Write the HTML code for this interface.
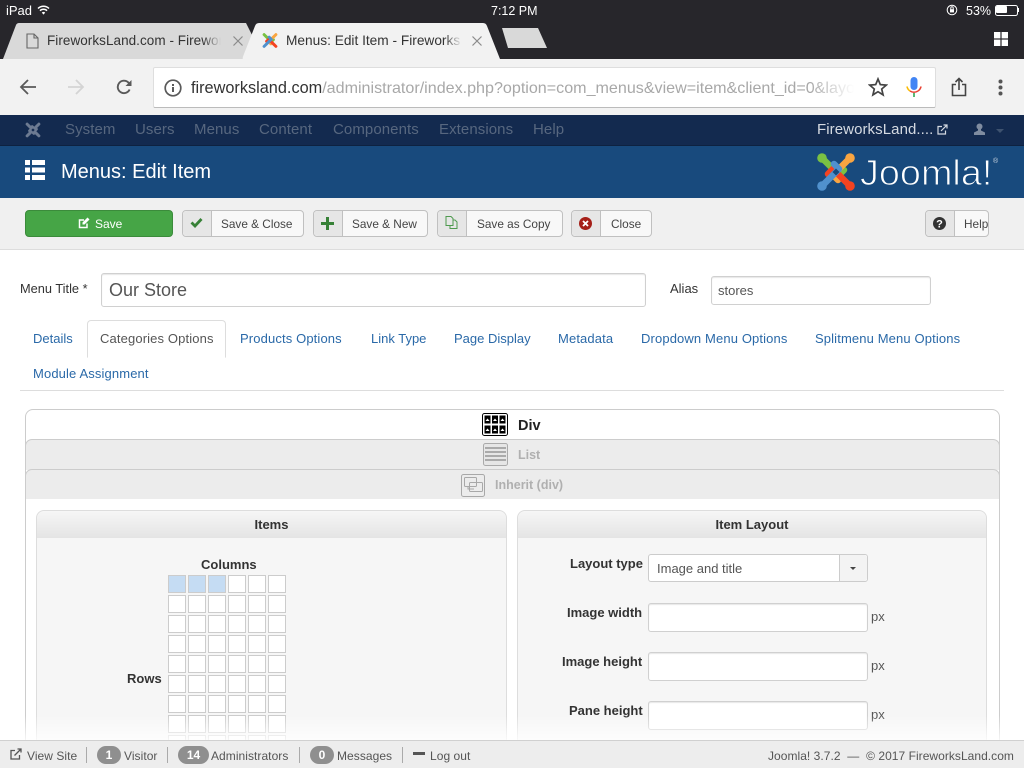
<!DOCTYPE html>
<html><head><meta charset="utf-8"><title>Menus: Edit Item</title>
<style>
html,body{margin:0;padding:0;width:1024px;height:768px;overflow:hidden;background:#fff}
body{position:relative;font-family:"Liberation Sans",sans-serif;color:#333}
.a,.t{position:absolute}
.t{white-space:nowrap;line-height:18px}
.btn{position:absolute;top:210px;height:25px;border:1px solid #c0c0c0;border-radius:4px;background:#f8f8f8;box-sizing:content-box}
.btn i{position:absolute;left:0;top:0;bottom:0;width:28px;background:#e6e6e6;border-right:1px solid #c0c0c0;border-radius:4px 0 0 4px}
.btn span{position:absolute;top:4px;font-size:11.8px;line-height:18px;color:#444;white-space:nowrap}
.tab{position:absolute;font-size:13px;line-height:18px;color:#2a69a8;white-space:nowrap;letter-spacing:.13px}
.nav{position:absolute;top:121px;font-size:15px;line-height:18px;color:#57677f;white-space:nowrap;letter-spacing:.08px}
.lbl{position:absolute;font-weight:bold;font-size:13px;line-height:16px;color:#333;text-align:right;white-space:nowrap}
.inp{position:absolute;left:648px;width:218px;height:27px;background:#fff;border:1px solid #d0d0d0;border-radius:3px;box-sizing:content-box;box-shadow:inset 0 1px 1px rgba(0,0,0,.1)}
.px{position:absolute;left:871px;font-size:13px;line-height:16px;color:#555}
.c{position:absolute;width:16px;height:16px;border:1px solid #ccc;background:#fff}
.ph{position:absolute;top:511px;height:27px;background:linear-gradient(#f6f6f6,#e4e4e4);border-radius:8px 8px 0 0;text-align:center;font-weight:bold;font-size:13px;line-height:28px;color:#333}
.panel{position:absolute;top:510px;height:240px;background:#f6f6f6;border:1px solid #ddd;border-radius:8px 8px 0 0;box-sizing:border-box}
.f{position:absolute;top:749px;font-size:12px;line-height:14px;color:#555;white-space:nowrap;letter-spacing:.05px}
.bd{position:absolute;top:746px;height:18px;border-radius:9px;background:#8f8f8f;color:#fff;font-size:12px;font-weight:bold;text-align:center;line-height:19px}
.sep{position:absolute;top:747px;width:1px;height:16px;background:#aaa}
</style></head><body>

<!-- iOS status bar & tab strip -->
<div class="a" style="left:0;top:0;width:1024px;height:59px;background:#27262b"></div>
<div class="t" style="left:6px;top:2px;font-size:13px;color:#fff">iPad</div>
<svg class="a" style="left:37px;top:5px" width="13" height="10" viewBox="0 0 13 10"><path d="M1 3.500a8 8 0 0 1 11 0M3 5.700a5 5 0 0 1 7 0" fill="none" stroke="#fff" stroke-width="1.500"/><path d="M4.800 7.600a2.600 2.600 0 0 1 3.400 0L6.500 9.600z" fill="#fff"/></svg>
<div class="t" style="left:491px;top:2px;font-size:12.5px;color:#fff">7:12 PM</div>
<svg class="a" style="left:946px;top:4px" width="12" height="12" viewBox="0 0 12 12"><circle cx="6" cy="6" r="4.800" fill="none" stroke="#fff" stroke-width="1"/><rect x="4" y="5.200" width="4" height="3.200" fill="#fff"/><path d="M4.800 5.200V4a1.200 1.200 0 0 1 2.400 0v1.200" fill="none" stroke="#fff"/></svg>
<div class="t" style="left:966px;top:2px;font-size:12.5px;color:#fff">53%</div>
<div class="a" style="left:995px;top:5px;width:21px;height:9px;border:1px solid #fff;border-radius:2.500px"></div>
<div class="a" style="left:996px;top:6px;width:11px;height:7px;background:#fff;border-radius:1px"></div>
<div class="a" style="left:1018px;top:8px;width:1px;height:4px;background:#fff"></div>

<svg class="a" style="left:0;top:23px" width="560" height="36" viewBox="0 0 560 36">
<path d="M3 36 L16 2 Q17 0 19 0 H246 L253 14 L242 36Z" fill="#d9d9d9"/>
<path d="M242 36 L255 3 Q256 0 259 0 H483 Q486 0 487 3 L500 36Z" fill="#f2f2f2"/>
<path d="M502 5 H538 L547 25 H508Z" fill="#d9d9d9"/>
</svg>
<svg class="a" style="left:26px;top:33px" width="13" height="16" viewBox="0 0 13 16"><path d="M1 1H8L12 5V15H1ZM8 1V5H12" fill="none" stroke="#666" stroke-width="1.100"/></svg>
<div class="a" style="left:47px;top:32px;width:174px;height:18px;overflow:hidden"><div class="t" style="left:0;top:0;font-size:13.5px;color:#333;letter-spacing:.05px">FireworksLand.com - Fireworks</div><div class="a" style="right:0;top:0;width:18px;height:18px;background:linear-gradient(90deg,rgba(217,217,217,0),#d9d9d9)"></div></div>
<svg class="a" style="left:233px;top:36px" width="10" height="10" viewBox="0 0 10 10"><path d="M0.500 0.500L9.500 9.500M9.500 0.500L0.500 9.500" stroke="#8a8a8a" stroke-width="1.200"/></svg>
<svg class="a" style="left:262px;top:32px" width="16" height="17" viewBox="0 0 38 38" fill="none" stroke-width="7" stroke-linecap="round" stroke-linejoin="round">
<path d="M5 5 L10 10 L22 22 L27 17" stroke="#7ac143"/><path d="M33 5 L28 10 L16 22 L21 27" stroke="#f9a541"/><path d="M33 33 L28 28 L16 16 L11 21" stroke="#f44321"/><path d="M5 33 L10 28 L22 16 L17 11" stroke="#5091cd"/></svg>
<div class="a" style="left:286px;top:32px;width:176px;height:18px;overflow:hidden"><div class="t" style="left:0;top:0;font-size:13.7px;color:#333">Menus: Edit Item - Fireworks Land</div><div class="a" style="right:0;top:0;width:18px;height:18px;background:linear-gradient(90deg,rgba(242,242,242,0),#f2f2f2)"></div></div>
<svg class="a" style="left:472px;top:36px" width="10" height="10" viewBox="0 0 10 10"><path d="M0.500 0.500L9.500 9.500M9.500 0.500L0.500 9.500" stroke="#8a8a8a" stroke-width="1.200"/></svg>
<svg class="a" style="left:994px;top:32px" width="14" height="14" viewBox="0 0 14 14" fill="#fff"><rect width="6.400" height="6.400"/><rect x="7.600" width="6.400" height="6.400"/><rect y="7.600" width="6.400" height="6.400"/><rect x="7.600" y="7.600" width="6.400" height="6.400"/></svg>

<!-- Chrome toolbar -->
<div class="a" style="left:0;top:59px;width:1024px;height:56px;background:#f2f2f2"></div>
<svg class="a" style="left:19px;top:78px" width="18" height="18" viewBox="0 0 18 18"><path d="M17 9H2M9 2L2 9L9 16" fill="none" stroke="#5a5a5a" stroke-width="1.800"/></svg>
<svg class="a" style="left:67px;top:78px" width="18" height="18" viewBox="0 0 18 18"><path d="M1 9H16M9 2L16 9L9 16" fill="none" stroke="#d4d4d4" stroke-width="1.800"/></svg>
<svg class="a" style="left:115px;top:78px" width="18" height="18" viewBox="0 0 18 18"><path d="M14.600 11.500A6.200 6.200 0 1 1 13.400 4.600L15.200 6.400" fill="none" stroke="#5a5a5a" stroke-width="1.900"/><path d="M16.500 2V8H10.500Z" fill="#5a5a5a"/></svg>
<div class="a" style="left:153px;top:67px;width:781px;height:39px;background:#fff;border:1px solid #dedede;border-bottom:1px solid #bbb;border-radius:2px"></div>
<svg class="a" style="left:164px;top:79px" width="18" height="18" viewBox="0 0 18 18"><circle cx="9" cy="9" r="7.800" fill="none" stroke="#5a5a5a" stroke-width="1.700"/><rect x="8" y="8" width="2" height="5" fill="#5a5a5a"/><rect x="8" y="5" width="2" height="2" fill="#5a5a5a"/></svg>
<div class="a" style="left:191px;top:77px;width:668px;height:22px;overflow:hidden"><div class="t" style="left:0;top:1px;font-size:16.3px;color:#333;line-height:20px">fireworksland.com<span style="color:#a8a8a8;font-size:16.1px">/administrator/index.php?option=com_menus&amp;view=item&amp;client_id=0&amp;layout</span></div><div class="a" style="right:0;top:0;width:50px;height:22px;background:linear-gradient(90deg,rgba(255,255,255,0),#fff 90%)"></div></div>
<svg class="a" style="left:868px;top:77px" width="20" height="20" viewBox="0 0 20 20"><path d="M10 2L12.300 7.600L18.300 8.100L13.700 12L15.100 17.900L10 14.700L4.900 17.900L6.300 12L1.700 8.100L7.700 7.600Z" fill="none" stroke="#444" stroke-width="1.700"/></svg>
<svg class="a" style="left:906px;top:76px" width="16" height="22" viewBox="0 0 16 22"><rect x="4.500" y="1" width="7" height="13" rx="3.500" fill="#4285f4"/><path d="M1 10.500A7 7 0 0 0 4 15" fill="none" stroke="#fbbc05" stroke-width="1.600"/><path d="M15 10.500A7 7 0 0 1 12 15" fill="none" stroke="#ea4335" stroke-width="1.600"/><path d="M4 15Q8 17.500 12 15" fill="none" stroke="#ea4335" stroke-width="1.600"/><rect x="7.200" y="17" width="1.600" height="4" fill="#34a853"/></svg>
<svg class="a" style="left:951px;top:77px" width="16" height="20" viewBox="0 0 16 20"><path d="M5 7.500H1.500V18.500H14.500V7.500H11M8 13V2M4.500 5L8 1.500L11.500 5" fill="none" stroke="#444" stroke-width="1.600"/></svg>
<svg class="a" style="left:998px;top:79px" width="5" height="17" viewBox="0 0 5 17" fill="#555"><circle cx="2.500" cy="2.500" r="2"/><circle cx="2.500" cy="8.500" r="2"/><circle cx="2.500" cy="14.500" r="2"/></svg>

<!-- Joomla nav -->
<div class="a" style="left:0;top:115px;width:1024px;height:30px;background:#132a4f;border-bottom:1px solid #0e2240"></div>
<svg class="a" style="left:25px;top:122px" width="16" height="16" viewBox="0 0 38 38" fill="none" stroke="#6d7b92" stroke-width="7" stroke-linecap="round" stroke-linejoin="round"><path d="M5 5 L10 10 L22 22 L27 17"/><path d="M33 5 L28 10 L16 22 L21 27"/><path d="M33 33 L28 28 L16 16 L11 21"/><path d="M5 33 L10 28 L22 16 L17 11"/><path d="M19 15L23 19L19 23L15 19Z" fill="#132a4f" stroke="none"/></svg>
<div class="nav" style="left:65px">System</div><div class="nav" style="left:135px">Users</div><div class="nav" style="left:194px">Menus</div><div class="nav" style="left:259px">Content</div><div class="nav" style="left:333px">Components</div><div class="nav" style="left:439px">Extensions</div><div class="nav" style="left:533px">Help</div>
<div class="nav" style="left:817px;color:#d5dae2">FireworksLand....</div>
<svg class="a" style="left:937px;top:124px" width="11" height="11" viewBox="0 0 11 11"><path d="M5 2.500H1V10H8.500V6.500M4 7L10 1M6.500 1H10V4.500" fill="none" stroke="#d5dae2" stroke-width="1.200"/></svg>
<svg class="a" style="left:973px;top:123px" width="13" height="13" viewBox="0 0 13 13" fill="#7f8ca0"><circle cx="6.500" cy="3.500" r="3"/><path d="M5 6H8V7.500L12 9.500V12H1V9.500L5 7.500Z"/></svg>
<div class="a" style="left:996px;top:129px;border:4px solid transparent;border-top:4px solid #3e526f;border-bottom:0"></div>

<!-- Header -->
<div class="a" style="left:0;top:146px;width:1024px;height:52px;background:#184a7d"></div>
<svg class="a" style="left:25px;top:160px" width="20" height="20" viewBox="0 0 20 20" fill="#fff"><rect width="5" height="5"/><rect x="7" width="13" height="5"/><rect y="7.500" width="5" height="5"/><rect x="7" y="7.500" width="13" height="5"/><rect y="15" width="5" height="5"/><rect x="7" y="15" width="13" height="5"/></svg>
<div class="t" style="left:61px;top:160px;font-size:20px;line-height:24px;color:#fff">Menus: Edit Item</div>
<svg class="a" style="left:817px;top:153px" width="38" height="38" viewBox="0 0 38 38" fill="none" stroke-width="6.500" stroke-linecap="round" stroke-linejoin="round">
<path d="M5 5 L10 10 L22 22 L27 17" stroke="#7ac143"/>
<path d="M33 5 L28 10 L16 22 L21 27" stroke="#f9a541"/>
<path d="M33 33 L28 28 L16 16 L11 21" stroke="#f44321"/>
<path d="M5 33 L10 28 L22 16 L17 11" stroke="#5091cd"/>
<path d="M19 15.500L22.500 19L19 22.500L15.500 19Z" fill="#184a7d"/>
<circle cx="5" cy="5" r="4.800" fill="#7ac143"/><circle cx="33" cy="5" r="4.800" fill="#f9a541"/><circle cx="5" cy="33" r="4.800" fill="#5091cd"/><circle cx="33" cy="33" r="4.800" fill="#f44321"/></svg>
<div class="t" style="left:860px;top:153px;font-size:36px;line-height:40px;color:#fff;-webkit-text-stroke:1px #184a7d;transform-origin:0 0;transform:scaleX(1.05)">Joomla!</div>
<div class="t" style="left:993px;top:158px;font-size:7px;line-height:8px;color:#cdd6e2">®</div>

<!-- Toolbar -->
<div class="a" style="left:0;top:198px;width:1024px;height:52px;background:#f0f0f0;border-bottom:1px solid #ddd;box-sizing:border-box"></div>
<div class="a" style="left:25px;top:210px;width:146px;height:25px;background:#46a546;border:1px solid #3b8b3b;border-radius:4px"></div>
<svg class="a" style="left:78px;top:217px" width="12" height="12" viewBox="0 0 12 12"><path d="M9 6.500V10.500H1.500V3H6" fill="none" stroke="#fff" stroke-width="1.500"/><path d="M4.500 5.500L9.500 .5L11.500 2.500L6.500 7.500H4.500Z" fill="#fff"/></svg>
<div class="t" style="left:95px;top:215px;font-size:12px;color:#fff">Save</div>

<div class="btn" style="left:182px;width:120px"><i></i><span style="left:38px">Save &amp; Close</span></div>
<svg class="a" style="left:190px;top:217px" width="13" height="11" viewBox="0 0 13 11"><path d="M1.500 5.500L5 9L11.500 2" fill="none" stroke="#378137" stroke-width="2.800"/></svg>
<div class="btn" style="left:313px;width:113px"><i></i><span style="left:38px">Save &amp; New</span></div>
<svg class="a" style="left:321px;top:217px" width="13" height="13" viewBox="0 0 13 13"><path d="M6.500 0V13M0 6.500H13" stroke="#378137" stroke-width="3"/></svg>
<div class="btn" style="left:437px;width:124px"><i></i><span style="left:39px">Save as Copy</span></div>
<svg class="a" style="left:445px;top:216px" width="13" height="13" viewBox="0 0 13 13"><path d="M1 .5H6L8 2.500V9.500H1ZM8 4H10L12 6V12.500H5V9.500" fill="none" stroke="#4f9a4f" stroke-width="1"/></svg>
<div class="btn" style="left:571px;width:79px"><i></i><span style="left:39px">Close</span></div>
<svg class="a" style="left:579px;top:217px" width="13" height="13" viewBox="0 0 13 13"><circle cx="6.500" cy="6.500" r="6.500" fill="#a51f18"/><path d="M4 4L9 9M9 4L4 9" stroke="#fff" stroke-width="1.800"/></svg>
<div class="btn" style="left:925px;width:62px"><i></i><span style="left:38px">Help</span></div>
<svg class="a" style="left:933px;top:217px" width="13" height="13" viewBox="0 0 13 13"><circle cx="6.500" cy="6.500" r="6.500" fill="#333"/><text x="6.500" y="10.500" font-family="Liberation Sans" font-size="11" font-weight="bold" text-anchor="middle" fill="#fff">?</text></svg>

<!-- Title row -->
<div class="t" style="left:20px;top:280px;font-size:12.8px">Menu Title *</div>
<div class="a" style="left:101px;top:273px;width:543px;height:32px;background:#fff;border:1px solid #d0d0d0;border-radius:3px;box-shadow:inset 0 1px 1px rgba(0,0,0,.1)"></div>
<div class="t" style="left:109px;top:279px;font-size:18px;line-height:22px;color:#555">Our Store</div>
<div class="t" style="left:670px;top:280px;font-size:13px">Alias</div>
<div class="a" style="left:711px;top:276px;width:218px;height:27px;background:#fff;border:1px solid #d0d0d0;border-radius:3px;box-shadow:inset 0 1px 1px rgba(0,0,0,.1)"></div>
<div class="t" style="left:718px;top:282px;font-size:13px;color:#555">stores</div>

<!-- Tabs -->
<div class="tab" style="left:33px;top:330px;letter-spacing:0">Details</div>
<div class="a" style="left:87px;top:320px;width:137px;height:36px;background:#fff;border:1px solid #ddd;border-bottom:1px solid #fff;border-radius:4px 4px 0 0;z-index:2"></div>
<div class="tab" style="left:100px;top:330px;color:#555;z-index:3">Categories Options</div>
<div class="tab" style="left:240px;top:330px">Products Options</div>
<div class="tab" style="left:371px;top:330px;letter-spacing:0">Link Type</div>
<div class="tab" style="left:454px;top:330px;letter-spacing:0">Page Display</div>
<div class="tab" style="left:558px;top:330px">Metadata</div>
<div class="tab" style="left:641px;top:330px">Dropdown Menu Options</div>
<div class="tab" style="left:815px;top:330px">Splitmenu Menu Options</div>
<div class="tab" style="left:33px;top:365px">Module Assignment</div>
<div class="a" style="left:20px;top:390px;width:984px;height:1px;background:#ddd"></div>

<!-- Accordion -->
<div class="a" style="left:25px;top:409px;width:973px;height:345px;border:1px solid #ccc;border-radius:8px 8px 0 0;background:#fff"></div>
<div class="a" style="left:25px;top:439px;width:973px;height:30px;background:#ececec;border:1px solid #ccc;border-bottom:0;border-radius:7px 7px 0 0"></div>
<div class="a" style="left:25px;top:469px;width:973px;height:29px;background:#ececec;border:1px solid #ccc;border-bottom:0;border-radius:7px 7px 0 0"></div>
<svg class="a" style="left:482px;top:413px" width="26" height="23" viewBox="0 0 26 23"><rect x=".5" y=".5" width="25" height="22" rx="2" fill="#fff" stroke="#000"/><g fill="#000"><rect x="2.500" y="2.500" width="6" height="8"/><rect x="10" y="2.500" width="6" height="8"/><rect x="17.500" y="2.500" width="6" height="8"/><rect x="2.500" y="12.500" width="6" height="8"/><rect x="10" y="12.500" width="6" height="8"/><rect x="17.500" y="12.500" width="6" height="8"/></g><g fill="#fff"><path d="M3.500 8L5.500 5.500L7.500 8Z"/><path d="M11 8L13 5.500L15 8Z"/><path d="M18.500 8L20.500 5.500L22.500 8Z"/><path d="M3.500 18L5.500 15.500L7.500 18Z"/><path d="M11 18L13 15.500L15 18Z"/><path d="M18.500 18L20.500 15.500L22.500 18Z"/></g></svg>
<div class="t" style="left:518px;top:417px;font-size:14.5px;font-weight:bold;color:#222">Div</div>
<svg class="a" style="left:483px;top:443px" width="25" height="23" viewBox="0 0 25 23"><rect x=".5" y=".5" width="24" height="22" rx="2" fill="#e6e6e6" stroke="#aaa"/><path d="M2 5H23M2 9H23M2 13H23M2 17H23" stroke="#aaa" stroke-width="2"/></svg>
<div class="t" style="left:518px;top:446px;font-size:12.5px;font-weight:bold;color:#b0b0b0">List</div>
<svg class="a" style="left:461px;top:474px" width="25" height="23" viewBox="0 0 25 23" fill="none" stroke="#a8a8a8"><rect x=".5" y=".5" width="23" height="22" rx="2"/><rect x="3.500" y="3.500" width="12" height="9" rx="1"/><rect x="8.500" y="8.500" width="13" height="9" rx="1"/><path d="M7 12.500V15H13"/></svg>
<div class="t" style="left:495px;top:476px;font-size:12.5px;font-weight:bold;color:#b0b0b0">Inherit (div)</div>

<!-- Items panel -->
<div class="panel" style="left:36px;width:471px"></div>
<div class="ph" style="left:37px;width:469px">Items</div>
<div class="panel" style="left:517px;width:470px"></div>
<div class="ph" style="left:518px;width:468px">Item Layout</div>

<div class="lbl" style="left:201px;top:557px">Columns</div>
<div class="lbl" style="left:127px;top:671px">Rows</div>

<div class="lbl" style="left:570px;top:556px">Layout type</div>
<div class="a" style="left:648px;top:554px;width:218px;height:26px;background:#fff;border:1px solid #ccc;border-radius:3px"></div>
<div class="a" style="left:839px;top:555px;width:27px;height:26px;background:#f3f3f3;border-left:1px solid #ccc;border-radius:0 3px 3px 0"></div>
<div class="a" style="left:850px;top:567px;border:3.500px solid transparent;border-top:3.500px solid #444;border-bottom:0"></div>
<div class="t" style="left:657px;top:560px;font-size:13px;color:#555">Image and title</div>
<div class="lbl" style="left:567px;top:605px">Image width</div>
<div class="inp" style="top:603px"></div><div class="px" style="top:609px">px</div>
<div class="lbl" style="left:562px;top:654px">Image height</div>
<div class="inp" style="top:652px"></div><div class="px" style="top:658px">px</div>
<div class="lbl" style="left:569px;top:703px">Pane height</div>
<div class="inp" style="top:701px"></div><div class="px" style="top:707px">px</div>

<!-- cells -->
<div class="c" style="left:168px;top:575px;background:#c5dcf3"></div><div class="c" style="left:188px;top:575px;background:#c5dcf3"></div><div class="c" style="left:208px;top:575px;background:#c5dcf3"></div><div class="c" style="left:228px;top:575px"></div><div class="c" style="left:248px;top:575px"></div><div class="c" style="left:268px;top:575px"></div>
<div class="c" style="left:168px;top:595px"></div><div class="c" style="left:188px;top:595px"></div><div class="c" style="left:208px;top:595px"></div><div class="c" style="left:228px;top:595px"></div><div class="c" style="left:248px;top:595px"></div><div class="c" style="left:268px;top:595px"></div>
<div class="c" style="left:168px;top:615px"></div><div class="c" style="left:188px;top:615px"></div><div class="c" style="left:208px;top:615px"></div><div class="c" style="left:228px;top:615px"></div><div class="c" style="left:248px;top:615px"></div><div class="c" style="left:268px;top:615px"></div>
<div class="c" style="left:168px;top:635px"></div><div class="c" style="left:188px;top:635px"></div><div class="c" style="left:208px;top:635px"></div><div class="c" style="left:228px;top:635px"></div><div class="c" style="left:248px;top:635px"></div><div class="c" style="left:268px;top:635px"></div>
<div class="c" style="left:168px;top:655px"></div><div class="c" style="left:188px;top:655px"></div><div class="c" style="left:208px;top:655px"></div><div class="c" style="left:228px;top:655px"></div><div class="c" style="left:248px;top:655px"></div><div class="c" style="left:268px;top:655px"></div>
<div class="c" style="left:168px;top:675px"></div><div class="c" style="left:188px;top:675px"></div><div class="c" style="left:208px;top:675px"></div><div class="c" style="left:228px;top:675px"></div><div class="c" style="left:248px;top:675px"></div><div class="c" style="left:268px;top:675px"></div>
<div class="c" style="left:168px;top:695px"></div><div class="c" style="left:188px;top:695px"></div><div class="c" style="left:208px;top:695px"></div><div class="c" style="left:228px;top:695px"></div><div class="c" style="left:248px;top:695px"></div><div class="c" style="left:268px;top:695px"></div>
<div class="c" style="left:168px;top:715px"></div><div class="c" style="left:188px;top:715px"></div><div class="c" style="left:208px;top:715px"></div><div class="c" style="left:228px;top:715px"></div><div class="c" style="left:248px;top:715px"></div><div class="c" style="left:268px;top:715px"></div>
<div class="c" style="left:168px;top:735px"></div><div class="c" style="left:188px;top:735px"></div><div class="c" style="left:208px;top:735px"></div><div class="c" style="left:228px;top:735px"></div><div class="c" style="left:248px;top:735px"></div><div class="c" style="left:268px;top:735px"></div>

<!-- fade above footer -->
<div class="a" style="left:0;top:715px;width:1024px;height:25px;background:linear-gradient(rgba(255,255,255,0),rgba(255,255,255,.8))"></div>

<!-- Footer -->
<div class="a" style="left:0;top:740px;width:1024px;height:28px;background:#ededed;border-top:1px solid #d0d0d0;box-sizing:border-box"></div>
<svg class="a" style="left:10px;top:748px" width="12" height="12" viewBox="0 0 12 12"><path d="M5 2.500H1V11H9.500V7M4.500 7.500L11 1M7.500 1H11V4.500" fill="none" stroke="#555" stroke-width="1.300"/></svg>
<div class="f" style="left:27px">View Site</div><div class="sep" style="left:86px"></div>
<div class="bd" style="left:97px;width:24px">1</div><div class="f" style="left:124px">Visitor</div><div class="sep" style="left:167px"></div>
<div class="bd" style="left:178px;width:31px">14</div><div class="f" style="left:211px">Administrators</div><div class="sep" style="left:299px"></div>
<div class="bd" style="left:310px;width:24px">0</div><div class="f" style="left:337px">Messages</div><div class="sep" style="left:402px"></div>
<div class="a" style="left:413px;top:752px;width:12px;height:3px;background:#555"></div>
<div class="f" style="left:430px">Log out</div>
<div class="f" style="left:768px;font-size:12px;letter-spacing:.04px">Joomla! 3.7.2 &nbsp;— &nbsp;© 2017 FireworksLand.com</div>
</body></html>
